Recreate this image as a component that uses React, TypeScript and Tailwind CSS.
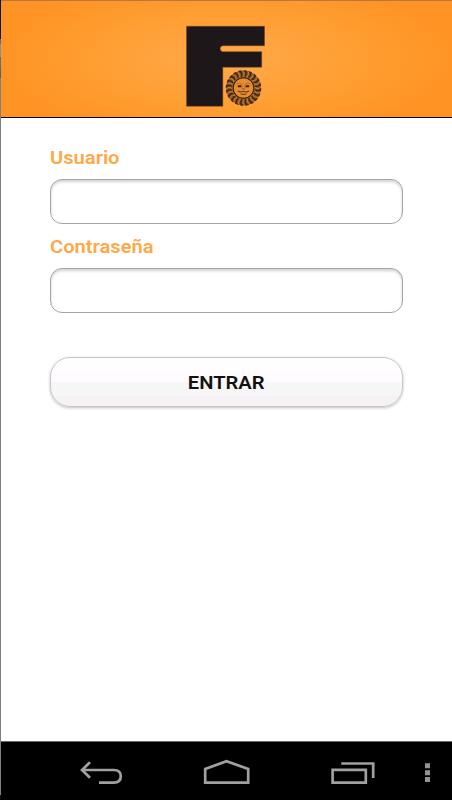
const rays = Array.from({ length: 20 }, (_, i) => i * 18);

function Logo() {
  return (
    <svg width="80" height="82" viewBox="186 25 80 82" className="mr-[2px] block" aria-label="F">
      <path
        d="M186.5 26.3H264.5V45.7H223Q220.2 46 220.2 48.7T223 51.7H261.7V67.2H222.8V106.2H186.5Z"
        fill="#1d171a"
        stroke="#70431b"
        strokeWidth=".5"
      />
      <circle cx="243.5" cy="88" r="14.2" fill="none" stroke="#80511f" strokeWidth="6" />
      <circle cx="243.5" cy="88" r="17" fill="none" stroke="#4a2f1a" strokeWidth="1.6" strokeDasharray="3.4 1.9" />
      {rays.map((a) => (
        <g key={a} transform={`rotate(${a} 243.5 88)`}>
          <path d="M242.7 76.6Q245 74.5 243.3 71.2" fill="none" stroke="#c0782b" strokeWidth="1.2" />
          <path d="M245.1 76.6Q247 74.5 245.4 71.2" fill="none" stroke="#35231a" strokeWidth="1.2" />
        </g>
      ))}
      <circle cx="243.5" cy="88" r="10.4" fill="#e98c2e" stroke="#3a2417" strokeWidth="1.3" />
      <path
        d="M236.5 84Q239.5 81.8 242 84.3V88.6H245V84.3Q247.5 81.8 250.5 84M242 89.2H245"
        fill="none"
        stroke="#a8662a"
        strokeWidth=".8"
      />
      <path d="M237.8 86.2H241.2M245.8 86.2H249.2" stroke="#3a2417" strokeWidth="2" />
      <path
        d="M237.8 91Q240.5 92.6 243.5 91.2Q246.5 92.6 249.2 91M240.7 93.7Q243.5 95 246.3 93.7"
        fill="none"
        stroke="#6b401d"
        strokeWidth="1.2"
      />
    </svg>
  );
}

function Field({ label, id, type }: { label: string; id: string; type: string }) {
  return (
    <div className="h-[89px]">
      <label
        htmlFor={id}
        className="block h-[34px] pt-px text-[19px] leading-[24px] font-semibold text-[#ffa846]"
      >
        <span className="inline-block origin-left scale-x-[1.06]">{label}</span>
      </label>
      <input
        id={id}
        type={type}
        className="block h-[45px] w-full rounded-[12px] border border-[#a5a5a5] bg-white px-3 shadow-[inset_0_2px_3px_rgba(0,0,0,0.18)] outline-none"
      />
    </div>
  );
}

function NavigationBar() {
  return (
    <nav className="flex h-[59px] shrink-0 border-t border-[#686868] bg-black">
      <svg width="451" height="58" viewBox="1 742 451 58" fill="none" stroke="#a0a0a0" strokeWidth="2.7">
        <path d="M90 762.2L82 770L90 777.8M82 770H113.7C118.5 770 120.8 772 120.8 776.3S118.5 782.6 113.7 782.6H99" />
        <path d="M205.2 782.6V769L226.5 761.2L248.2 769V782.6Z" />
        <path d="M332.6 769.9H365.8V782.6H332.6ZM341.3 763.5H373.2V778" />
        <path d="M425 763.3H430V768.3H425ZM425 770.2H430V775.2H425ZM425 777.1H430V782.1H425Z" fill="#949494" stroke="none" />
      </svg>
    </nav>
  );
}

export default function App() {
  return (
    <div className="flex h-[800px] w-[452px] overflow-hidden bg-white font-[Roboto,sans-serif]">
      <div className="flex w-px shrink-0 flex-col bg-[#808080]">
        <div className="h-[39px] bg-[#071947]" />
        <div className="h-[5px] bg-[#606c76]" />
        <div className="h-[13px] bg-[#81949b]" />
        <div className="h-[10px] bg-[#607078]" />
        <div className="h-[3px] bg-[#398277]" />
        <div className="h-[8px] bg-[#566269]" />
        <div className="grow" />
        <div className="h-[5px] bg-[#071024]" />
      </div>
      <div className="flex min-w-0 grow flex-col">
        <header className="flex h-[118px] shrink-0 justify-center border-t border-b border-t-[#b8754a] border-b-black bg-[radial-gradient(ellipse_226px_80px_at_center,#ffa94b_0%,#ff9e32_60%,#ff9424_100%)] pt-6">
          <Logo />
        </header>
        <main className="grow pt-[27px] pr-[49px] pl-[49px]">
          <Field label="Usuario" id="usuario" type="text" />
          <Field label="Contraseña" id="contrasena" type="password" />
          <button className="mt-[34px] block h-[50px] w-full rounded-[20px] border border-[#c6c6c6] bg-[linear-gradient(#fff_0%,#fefaff_49%,#f6f6f6_50%,#f6f6f6_79%,#f5f1f5_80%)] pt-px text-[19px] leading-[24px] font-semibold text-[#111] shadow-[0_1px_3px_rgba(0,0,0,0.25)]">
            <span className="inline-block scale-x-[1.06]">ENTRAR</span>
          </button>
        </main>
        <NavigationBar />
      </div>
    </div>
  );
}
